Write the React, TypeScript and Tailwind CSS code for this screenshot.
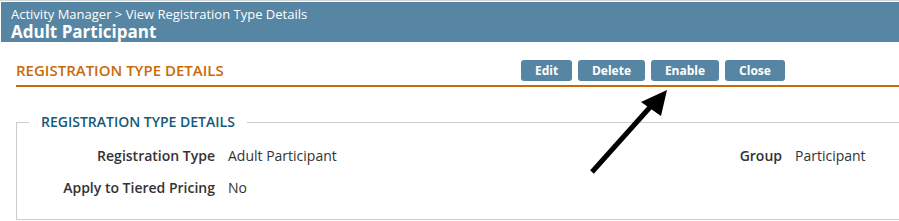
export default function App() {
  const font = { fontFamily: '"Open Sans", "Liberation Sans", sans-serif' };
  const buttons = ["Edit", "Delete", "Enable", "Close"];

  return (
    <div
      className="relative w-[899px] h-[221px] overflow-hidden bg-white border-t border-[#d4d4d4]"
      style={font}
    >
      <div className="ml-px mt-px w-[920px] h-[40px] bg-[#5686a3] pl-[10px] pt-[4px] text-white">
        <div className="text-[13px] leading-[16px]">
          Activity Manager &gt; View Registration Type Details
        </div>
        <div className="text-[17px] leading-[19px] font-bold">Adult Participant</div>
      </div>

      <div className="ml-[16px] w-[920px]">
        <div className="flex items-end h-[45px] border-b-2 border-[#c96a0a]">
          <h2 className="w-[505px] pb-[5px] text-[15px] leading-[20px] font-semibold text-[#c96a0a]">
            REGISTRATION TYPE DETAILS
          </h2>
          <div className="flex gap-[6px] pb-[4px]">
            {buttons.map((b) => (
              <button
                key={b}
                className={`h-[21px] rounded-[3px] bg-[#5686a3] text-white text-[12px] font-bold leading-none ${
                  b === "Edit"
                    ? "w-[51px]"
                    : b === "Delete"
                      ? "w-[67px]"
                      : b === "Enable"
                        ? "w-[68px]"
                        : "w-[60px]"
                }`}
              >
                {b}
              </button>
            ))}
          </div>
        </div>

        <fieldset className="mt-[26px] border border-[#cccccc] pl-[12px] h-[107px]">
          <legend className="px-[12px] text-[14px] leading-[18px] font-semibold text-[#16597a]">
            REGISTRATION TYPE DETAILS
          </legend>
          <div className="-ml-[12px] mt-[15px] grid grid-cols-[198px_400px_141px_auto] gap-x-[13px] gap-y-[13px] text-[14px] leading-[19px] text-[#333333]">
            <div className="text-right font-semibold">Registration Type</div>
            <div>Adult Participant</div>
            <div className="text-right font-semibold">Group</div>
            <div>Participant</div>
            <div className="text-right font-semibold">Apply to Tiered Pricing</div>
            <div>No</div>
            <div />
            <div />
          </div>
        </fieldset>
      </div>

      <svg
        className="absolute left-0 top-0 pointer-events-none"
        width="899"
        height="221"
        viewBox="0 0 899 221"
      >
        <line x1="592" y1="171" x2="652" y2="104" stroke="black" strokeWidth="5" />
        <polygon points="667,89 641,101 661,115" fill="black" />
      </svg>
    </div>
  );
}
